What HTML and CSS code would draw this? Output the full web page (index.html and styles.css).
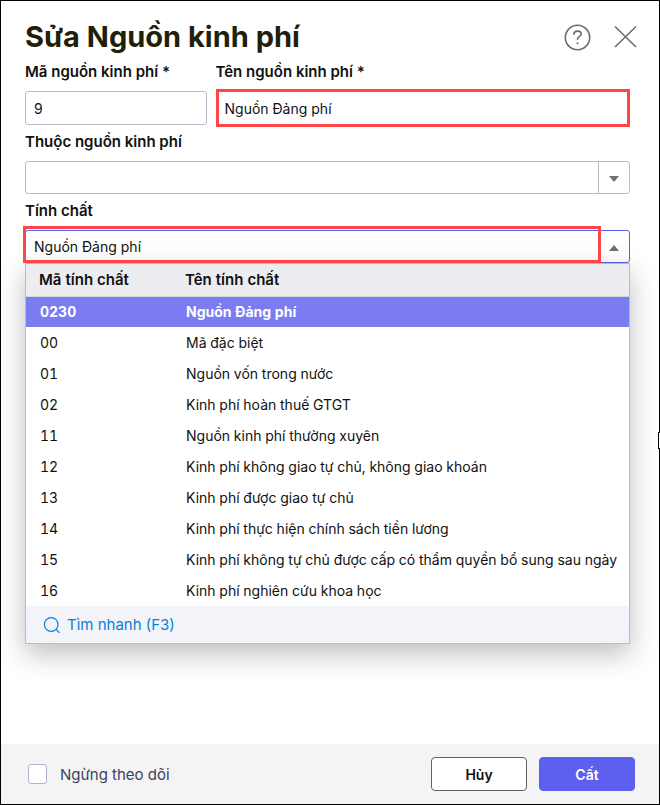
FILE: index.html
```html
<!DOCTYPE html>
<html lang="vi">
<head>
  <meta charset="UTF-8">
  <meta name="viewport" content="width=device-width, initial-scale=1.0">
  <title>Sửa Nguồn kinh phí</title>
  <link rel="stylesheet" href="styles.css">
</head>
<body>
  <form class="dialog">
    <header class="dialog-header">
      <h1>Sửa Nguồn kinh phí</h1>
      <div class="header-actions">
        <button type="button" class="icon-btn" aria-label="Trợ giúp">
          <svg width="28" height="28" viewBox="0 0 28 28" fill="none" stroke="#6b6b6b" stroke-width="1.6">
            <circle cx="14.5" cy="14.5" r="12.2"/>
            <path d="M10.8 11.2c.2-2 1.7-3.1 3.8-3.1 2.2 0 3.6 1.2 3.6 3 0 2.6-3.7 2.6-3.7 5.1" stroke-linecap="round"/>
            <circle cx="14.5" cy="20.2" r="1" fill="#6b6b6b" stroke="none"/>
          </svg>
        </button>
        <button type="button" class="icon-btn" aria-label="Đóng">
          <svg width="28" height="28" viewBox="0 0 28 28" fill="none" stroke="#6b6b6b" stroke-width="1.6">
            <path d="M4 3.5L25 24M25 3.5L4 24"/>
          </svg>
        </button>
      </div>
    </header>

    <main class="dialog-body">
      <div class="row">
        <div class="field">
          <label for="ma">Mã nguồn kinh phí *</label>
          <input type="text" id="ma" class="text-input" value="9">
        </div>
        <div class="field">
          <label for="ten">Tên nguồn kinh phí *</label>
          <div class="marked">
            <input type="text" id="ten" class="text-input" value="Nguồn Đảng phí">
          </div>
        </div>
      </div>

      <div class="field">
        <label for="thuoc">Thuộc nguồn kinh phí</label>
        <div class="combo">
          <input type="text" id="thuoc" role="combobox" aria-expanded="false">
          <button type="button" class="combo-btn" aria-label="Mở danh sách">
            <svg width="10" height="6" viewBox="0 0 10 6"><path d="M0 0h10L5 6z" fill="#6f6f6f"/></svg>
          </button>
        </div>
      </div>

      <div class="field">
        <label for="tinhchat">Tính chất</label>
        <div class="combo open">
          <input type="text" id="tinhchat" role="combobox" aria-expanded="true" aria-controls="ds-tinhchat" value="Nguồn Đảng phí">
          <button type="button" class="combo-btn" aria-label="Đóng danh sách">
            <svg width="10" height="6" viewBox="0 0 10 6"><path d="M0 6h10L5 0z" fill="#6f6f6f"/></svg>
          </button>
          <div class="dropdown" id="ds-tinhchat">
            <table>
              <thead>
                <tr><th class="code">Mã tính chất</th><th>Tên tính chất</th></tr>
              </thead>
              <tbody>
                <tr class="selected"><td>0230</td><td>Nguồn Đảng phí</td></tr>
                <tr><td>00</td><td>Mã đặc biệt</td></tr>
                <tr><td>01</td><td>Nguồn vốn trong nước</td></tr>
                <tr><td>02</td><td>Kinh phí hoàn thuế GTGT</td></tr>
                <tr><td>11</td><td>Nguồn kinh phí thường xuyên</td></tr>
                <tr><td>12</td><td>Kinh phí không giao tự chủ, không giao khoán</td></tr>
                <tr><td>13</td><td>Kinh phí được giao tự chủ</td></tr>
                <tr><td>14</td><td>Kinh phí thực hiện chính sách tiền lương</td></tr>
                <tr><td>15</td><td>Kinh phí không tự chủ được cấp có thẩm quyền bổ sung sau ngày</td></tr>
                <tr><td>16</td><td>Kinh phí nghiên cứu khoa học</td></tr>
              </tbody>
            </table>
            <a href="#" class="quick-search">
              <svg width="18" height="18" viewBox="0 0 18 18" fill="none" stroke="#0a7fd9" stroke-width="1.2">
                <circle cx="8.2" cy="8.5" r="6.8"/>
                <path d="M13.2 13.5l3.4 3.4"/>
              </svg>
              Tìm nhanh (F3)
            </a>
          </div>
        </div>
      </div>
    </main>

    <footer class="dialog-footer">
      <label class="check">
        <input type="checkbox">
        Ngừng theo dõi
      </label>
      <button type="button" class="btn">Hủy</button>
      <button type="submit" class="btn primary">Cất</button>
    </footer>
    <span class="edge-handle"></span>
  </form>
</body>
</html>
```

FILE: styles.css
```css
* {
  box-sizing: border-box;
}
body {
  margin: 0;
  font-family: Inter, sans-serif;
  font-size: 14px;
  color: #111;
}
input, button {
  font: inherit;
  color: inherit;
}
.dialog {
  position: relative;
  display: flex;
  flex-direction: column;
  min-height: 100vh;
  border: 1px solid #000;
  background: #fff;
}
.dialog-header {
  display: flex;
  align-items: center;
  justify-content: space-between;
  padding: 16px 20px 0 24px;
}
h1 {
  margin: 0;
  font-size: 29px;
  line-height: 40px;
  font-weight: 700;
  color: #1f1f0a;
}
.header-actions {
  display: flex;
  gap: 20px;
}
.icon-btn {
  display: flex;
  padding: 0;
  border: none;
  background: none;
  cursor: pointer;
}
.dialog-body {
  flex: 1;
  display: flex;
  flex-direction: column;
  gap: 6px;
  padding: 4px 29px 0 24px;
}
.row {
  display: grid;
  grid-template-columns: 30% 1fr;
  gap: 9px;
}
.field label {
  display: block;
  margin-bottom: 8px;
  font-size: 15px;
  line-height: 22px;
  font-weight: 600;
}
.text-input {
  display: block;
  width: 100%;
  height: 34px;
  padding: 0 8px;
  border: 1px solid #babac8;
  border-radius: 3px;
  background: #fff;
}
.marked {
  position: relative;
}
.marked::after, .open::after {
  content: "";
  position: absolute;
  border: 3px solid #ff4545;
  pointer-events: none;
}
.marked::after {
  inset: -2px 0;
}
.marked .text-input {
  border-color: transparent;
}
.combo {
  position: relative;
  display: flex;
  height: 33px;
  border: 1px solid #babac8;
  border-radius: 3px;
}
.combo input {
  flex: 1;
  min-width: 0;
  padding: 0 8px;
  border: none;
  outline: none;
  background: none;
}
.combo-btn {
  width: 31px;
  padding: 0;
  border: none;
  border-left: 1px solid #babac8;
  background: none;
  cursor: pointer;
}
.combo-btn svg {
  display: block;
  margin: 2px auto 0;
}
.open {
  border-color: #5d5fef;
}
.open::after {
  inset: -5px 28px -1px -3px;
  z-index: 2;
}
.dropdown {
  position: absolute;
  top: calc(100% + 1px);
  left: -1px;
  right: -1px;
  overflow: hidden;
  border: 1px solid #babac8;
  background: #fff;
  box-shadow: 0 10px 26px rgba(0, 0, 0, 0.26);
}
table {
  width: 100%;
  table-layout: fixed;
  border-collapse: collapse;
  font-variant-numeric: tabular-nums;
}
th, td {
  height: 31px;
  padding: 0 0 0 14px;
  text-align: left;
  white-space: nowrap;
}
th {
  height: 32px;
  padding-left: 13px;
  border-bottom: 1px solid #d5d5dc;
  background: #ecedf1;
  font-size: 15px;
  font-weight: 600;
}
.code {
  width: 146px;
}
.selected {
  background: #7b7cf2;
  color: #fff;
  font-weight: 700;
}
.quick-search {
  display: flex;
  align-items: center;
  gap: 6px;
  height: 37px;
  padding-left: 17px;
  background: #f3f4f9;
  color: #0a7fd9;
  font-size: 15px;
  text-decoration: none;
}
.dialog-footer {
  display: flex;
  align-items: center;
  gap: 12px;
  height: 60px;
  padding: 0 24px 0 27px;
  background: #f4f4f4;
}
.check {
  display: flex;
  align-items: center;
  gap: 13px;
  margin-right: auto;
  font-size: 15px;
  color: #3b4260;
}
.check input {
  appearance: none;
  width: 19px;
  height: 20px;
  margin: 0;
  border: 1px solid #afb3cc;
  border-radius: 3px;
  background: #fff;
}
.check input:checked {
  background: #5d5fef;
}
.btn {
  width: 96px;
  height: 34px;
  border: 1px solid #636363;
  border-radius: 4px;
  background: #fff;
  font-weight: 600;
  cursor: pointer;
}
.primary {
  border-color: #5d5fef;
  background: #5d5fef;
  color: #fff;
}
/* collapsed side panel handle on the window edge */
.edge-handle {
  position: absolute;
  top: 431px;
  right: -1px;
  width: 2px;
  height: 17px;
  border: 1px solid #000;
  border-right: none;
  background: #fff;
}
```
